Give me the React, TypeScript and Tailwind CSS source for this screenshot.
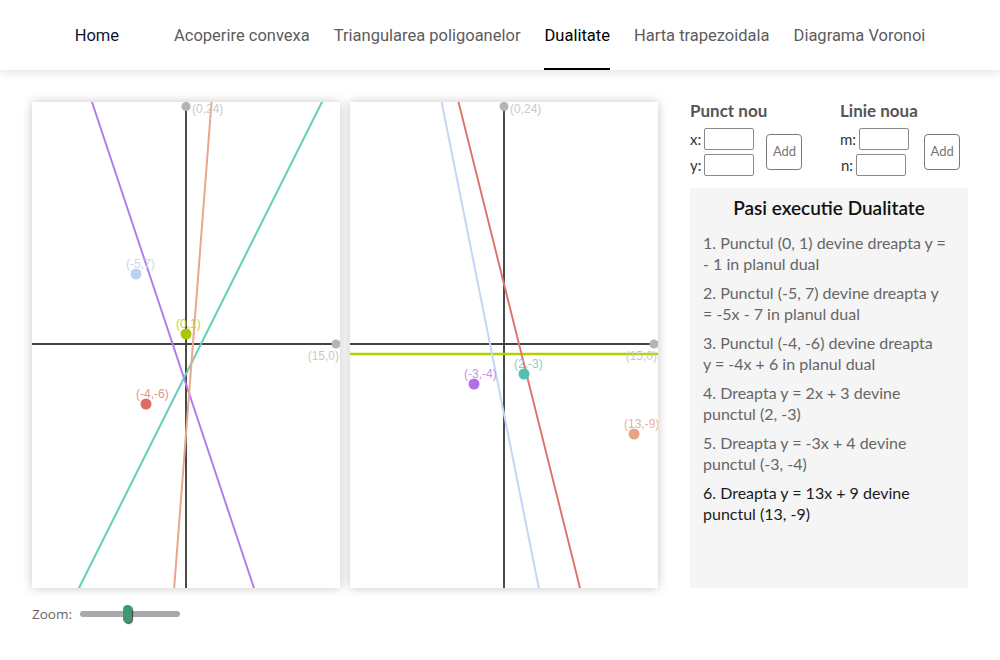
import React from 'react';

type Pt = { x: number; y: number; color: string; label: string; labelColor?: string };
type Ln = { m: number; b: number; color: string; width?: number };

// canvas geometry: 308x486, origin in the middle-ish, 10px per unit
const W = 308;
const H = 486;
const OX = 154;
const OY = 242;
const S = 10;
const toX = (x: number) => OX + x * S;
const toY = (y: number) => OY - y * S;

const NAV = ['Home', 'Acoperire convexa', 'Triangularea poligoanelor', 'Dualitate', 'Harta trapezoidala', 'Diagrama Voronoi'];

const LEFT_LINES: Ln[] = [
  { m: -3, b: -4, color: '#b47cee' },
  { m: 2, b: -3, color: '#66cdbd' },
  { m: 13, b: -9, color: '#eaa88d' },
];
const LEFT_POINTS: Pt[] = [
  { x: 0, y: 1, color: '#adc400', label: '(0,1)', labelColor: '#c2d43a' },
  { x: -5, y: 7, color: '#bcd0f5', label: '(-5,7)', labelColor: '#c6d7f6' },
  { x: -4, y: -6, color: '#de6a62', label: '(-4,-6)', labelColor: '#e8928b' },
];
const RIGHT_LINES: Ln[] = [
  { m: 0, b: -1, color: '#b5d000', width: 2.5 },
  { m: -5, b: -7, color: '#c3d6f7' },
  { m: -4, b: 6, color: '#e0736b' },
];
const RIGHT_POINTS: Pt[] = [
  { x: -3, y: -4, color: '#b06fea', label: '(-3,-4)', labelColor: '#c391ee' },
  { x: 2, y: -3, color: '#4fc1ae', label: '(2,-3)', labelColor: '#7fd3c5' },
  { x: 13, y: -9, color: '#e8a284', label: '(13,-9)', labelColor: '#ebaf95' },
];

const STEPS: [string, string][] = [
  ['1. Punctul (0, 1) devine dreapta y =', '- 1 in planul dual'],
  ['2. Punctul (-5, 7) devine dreapta y', '= -5x - 7 in planul dual'],
  ['3. Punctul (-4, -6) devine dreapta', 'y = -4x + 6 in planul dual'],
  ['4. Dreapta y = 2x + 3 devine', 'punctul (2, -3)'],
  ['5. Dreapta y = -3x + 4 devine', 'punctul (-3, -4)'],
  ['6. Dreapta y = 13x + 9 devine', 'punctul (13, -9)'],
];

const Plane = ({ lines, points }: { lines: Ln[]; points: Pt[] }) => (
  <div className="bg-white shadow-[0_0_10px_rgba(0,0,0,0.22)]">
    <svg width={W} height={H} className="block" style={{ fontFamily: '"Liberation Sans", Arial, sans-serif' }}>
      {/* axes */}
      <line x1={OX} y1={0} x2={OX} y2={H} stroke="#4a4a4a" strokeWidth={2} />
      <line x1={0} y1={OY} x2={W} y2={OY} stroke="#444" strokeWidth={2} />
      {lines.map((l, i) => (
        <line
          key={i}
          x1={toX(-20)}
          y1={toY(l.m * -20 + l.b)}
          x2={toX(20)}
          y2={toY(l.m * 20 + l.b)}
          stroke={l.color}
          strokeWidth={l.width ?? 2}
        />
      ))}
      {/* bounds markers */}
      <circle cx={toX(0)} cy={4.5} r={4.5} fill="#b4b4b4" />
      <text x={toX(0) + 6} y={11} fontSize={12} fill="#c9c9c9">(0,24)</text>
      <circle cx={toX(15)} cy={toY(0)} r={4.5} fill="#b4b4b4" />
      <text x={W - 1} y={toY(0) + 16} fontSize={12} fill="#c9c9c9" textAnchor="end">(15,0)</text>
      {points.map((p, i) => (
        <g key={i}>
          <circle cx={toX(p.x)} cy={toY(p.y)} r={5.5} fill={p.color} />
          <text x={toX(p.x) - 10} y={toY(p.y) - 6} fontSize={12} fill={p.labelColor ?? p.color}>
            {p.label}
          </text>
        </g>
      ))}
    </svg>
  </div>
);

const Field = ({ label }: { label: string }) => (
  <div className="flex items-center gap-[3px] h-[22px]">
    <span className="text-[15px] text-[#333]">{label}</span>
    <div className="w-[50px] h-[22px] border border-[#8a8a8a] rounded-[2px] bg-white" />
  </div>
);

const AddButton = () => (
  <button className="w-[36px] h-[36px] border border-[#7a7a7a] rounded-[4px] text-[13px] text-[#777] bg-white">
    Add
  </button>
);

export default function App() {
  return (
    <div className="w-[1000px] h-[660px] bg-white overflow-hidden" style={{ fontFamily: 'Lato, "Open Sans", sans-serif' }}>
      <nav
        className="h-[70px] bg-white shadow-[0_2px_10px_rgba(0,0,0,0.12)] flex justify-center text-[16.5px]"
        style={{ fontFamily: 'Roboto, sans-serif' }}
      >
        {NAV.map((item, i) => (
          <div key={item} className={`flex px-3 ${i === 0 ? 'mr-[31px]' : ''}`}>
            <span
              className={`flex items-center h-full pt-[3px] ${
                item === 'Dualitate'
                  ? 'border-b-2 border-black text-black pt-[5px]'
                  : i === 0
                  ? 'text-[#10152e]'
                  : 'text-[#5c5c5c]'
              }`}
            >
              {item}
            </span>
          </div>
        ))}
      </nav>

      <div className="pl-8 pt-8 flex">
        <div className="flex flex-col">
          <div className="flex gap-[10px]">
            <Plane lines={LEFT_LINES} points={LEFT_POINTS} />
            <Plane lines={RIGHT_LINES} points={RIGHT_POINTS} />
          </div>
          <div className="flex items-center mt-[18px] h-[16px]">
            <span className="text-[13.5px] text-[#666]" style={{ fontFamily: '"Open Sans", sans-serif' }}>Zoom:</span>
            <div className="ml-2 w-[100px] h-[6px] rounded-full bg-[#a9a9a9] flex items-center">
              <div className="ml-[43px] w-[9px] h-[18px] rounded-full bg-[#3a9b72] shadow-[1px_1px_1px_rgba(0,0,0,0.7)]" />
            </div>
          </div>
        </div>

        <div className="ml-8 w-[278px] flex flex-col">
          <div className="flex">
            <div className="w-[150px]">
              <div className="text-[17px] font-bold text-[#555] leading-[18px]">Punct nou</div>
              <div className="flex items-center mt-2">
                <div className="flex flex-col gap-1">
                  <Field label="x:" />
                  <Field label="y:" />
                </div>
                <div className="ml-3">
                  <AddButton />
                </div>
              </div>
            </div>
            <div>
              <div className="text-[17px] font-bold text-[#555] leading-[18px]">Linie noua</div>
              <div className="flex items-center mt-2">
                <div className="flex flex-col gap-1">
                  <Field label="m:" />
                  <div className="pl-[1px]">
                    <Field label="n:" />
                  </div>
                </div>
                <div className="ml-[15px]">
                  <AddButton />
                </div>
              </div>
            </div>
          </div>

          <div className="mt-3 h-[400px] bg-[#f5f5f5] px-[13px] pt-[9px]">
            <h3 className="text-center text-[19px] font-semibold text-[#111] leading-[22px]">Pasi executie Dualitate</h3>
            <div className="mt-[13px] flex flex-col gap-[8px]">
              {STEPS.map(([a, b], i) => (
                <p
                  key={i}
                  className={`text-[16px] leading-[21px] whitespace-nowrap ${i === STEPS.length - 1 ? 'text-[#1a1a1a]' : 'text-[#666]'}`}
                >
                  {a}
                  <br />
                  {b}
                </p>
              ))}
            </div>
          </div>
        </div>
      </div>
    </div>
  );
}
